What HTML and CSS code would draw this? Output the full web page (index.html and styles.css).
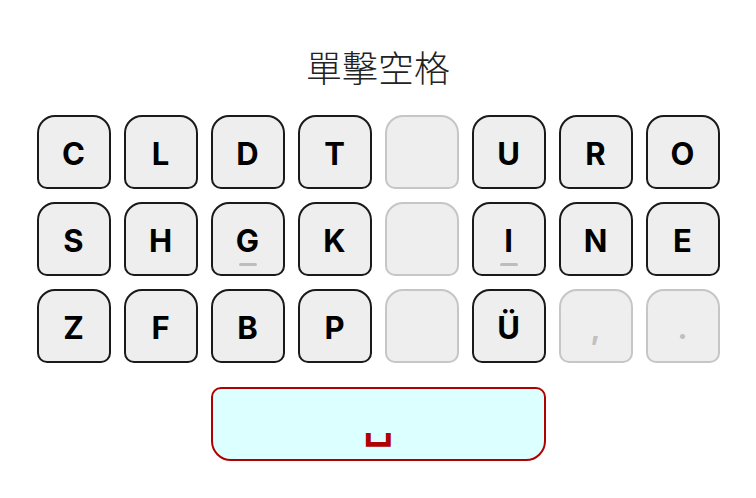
FILE: index.html
```html
<!DOCTYPE html>
<html lang="zh-Hant">
<head>
<meta charset="utf-8">
<title>單擊空格</title>
<link rel="stylesheet" href="styles.css">
</head>
<body>
<main class="app">
  <h1 class="title">單擊空格</h1>
  <div class="keyboard">
    <div class="key">C</div>
    <div class="key">L</div>
    <div class="key">D</div>
    <div class="key">T</div>
    <div class="key key-off"></div>
    <div class="key">U</div>
    <div class="key">R</div>
    <div class="key">O</div>

    <div class="key">S</div>
    <div class="key">H</div>
    <div class="key key-home">G</div>
    <div class="key">K</div>
    <div class="key key-off"></div>
    <div class="key key-home">I</div>
    <div class="key">N</div>
    <div class="key">E</div>

    <div class="key">Z</div>
    <div class="key">F</div>
    <div class="key">B</div>
    <div class="key">P</div>
    <div class="key key-off"></div>
    <div class="key">Ü</div>
    <div class="key key-off key-punct">,</div>
    <div class="key key-off key-punct">.</div>

    <div class="spacebar"><span class="space-sym">␣</span></div>
  </div>
</main>
</body>
</html>
```
FILE: styles.css
```css
* { box-sizing: border-box; }
html, body { margin: 0; padding: 0; background: #ffffff; }
body {
  width: 756px;
  height: 498px;
  overflow: hidden;
  font-family: Inter, "Noto Sans", sans-serif;
}
.app {
  display: flex;
  flex-direction: column;
  align-items: center;
  padding-top: 46px;
}
.title {
  margin: 0;
  height: 40px;
  line-height: 40px;
  font-family: "Noto Sans CJK TC", "Noto Sans CJK SC", sans-serif;
  font-weight: 300;
  font-size: 36px;
  color: #222222;
}
.keyboard {
  margin-top: 29px;
  display: grid;
  grid-template-columns: repeat(8, 74px);
  grid-template-rows: repeat(3, 74px) 85px;
  gap: 13px;
}
.key {
  position: relative;
  display: flex;
  align-items: center;
  justify-content: center;
  background: #eeeeee;
  border: 2px solid #1a1a1a;
  border-radius: 18px 18px 10px 10px;
  font-family: Inter, Roboto, sans-serif;
  font-weight: 700;
  font-size: 31px;
  color: #000000;
  padding-top: 2px;
}
.key-off {
  border-color: #c6c6c6;
}
.key-punct {
  color: #c0c0c0;
  font-size: 30px;
  padding-top: 4px;
}
.key-home::after {
  content: "";
  position: absolute;
  left: 50%;
  bottom: 8px;
  width: 18px;
  height: 3px;
  margin-left: -9px;
  border-radius: 2px;
  background: #bdbdbd;
}
.spacebar {
  grid-column: 3 / 7;
  margin-top: 11px;
  display: flex;
  align-items: flex-end;
  justify-content: center;
  background: #dcffff;
  border: 2px solid #b00000;
  border-radius: 10px 10px 20px 20px;
  padding-bottom: 15px;
}
.space-sym {
  font-family: "DejaVu Sans", sans-serif;
  font-weight: 700;
  font-size: 42px;
  line-height: 1;
  color: #b00000;
}
```
